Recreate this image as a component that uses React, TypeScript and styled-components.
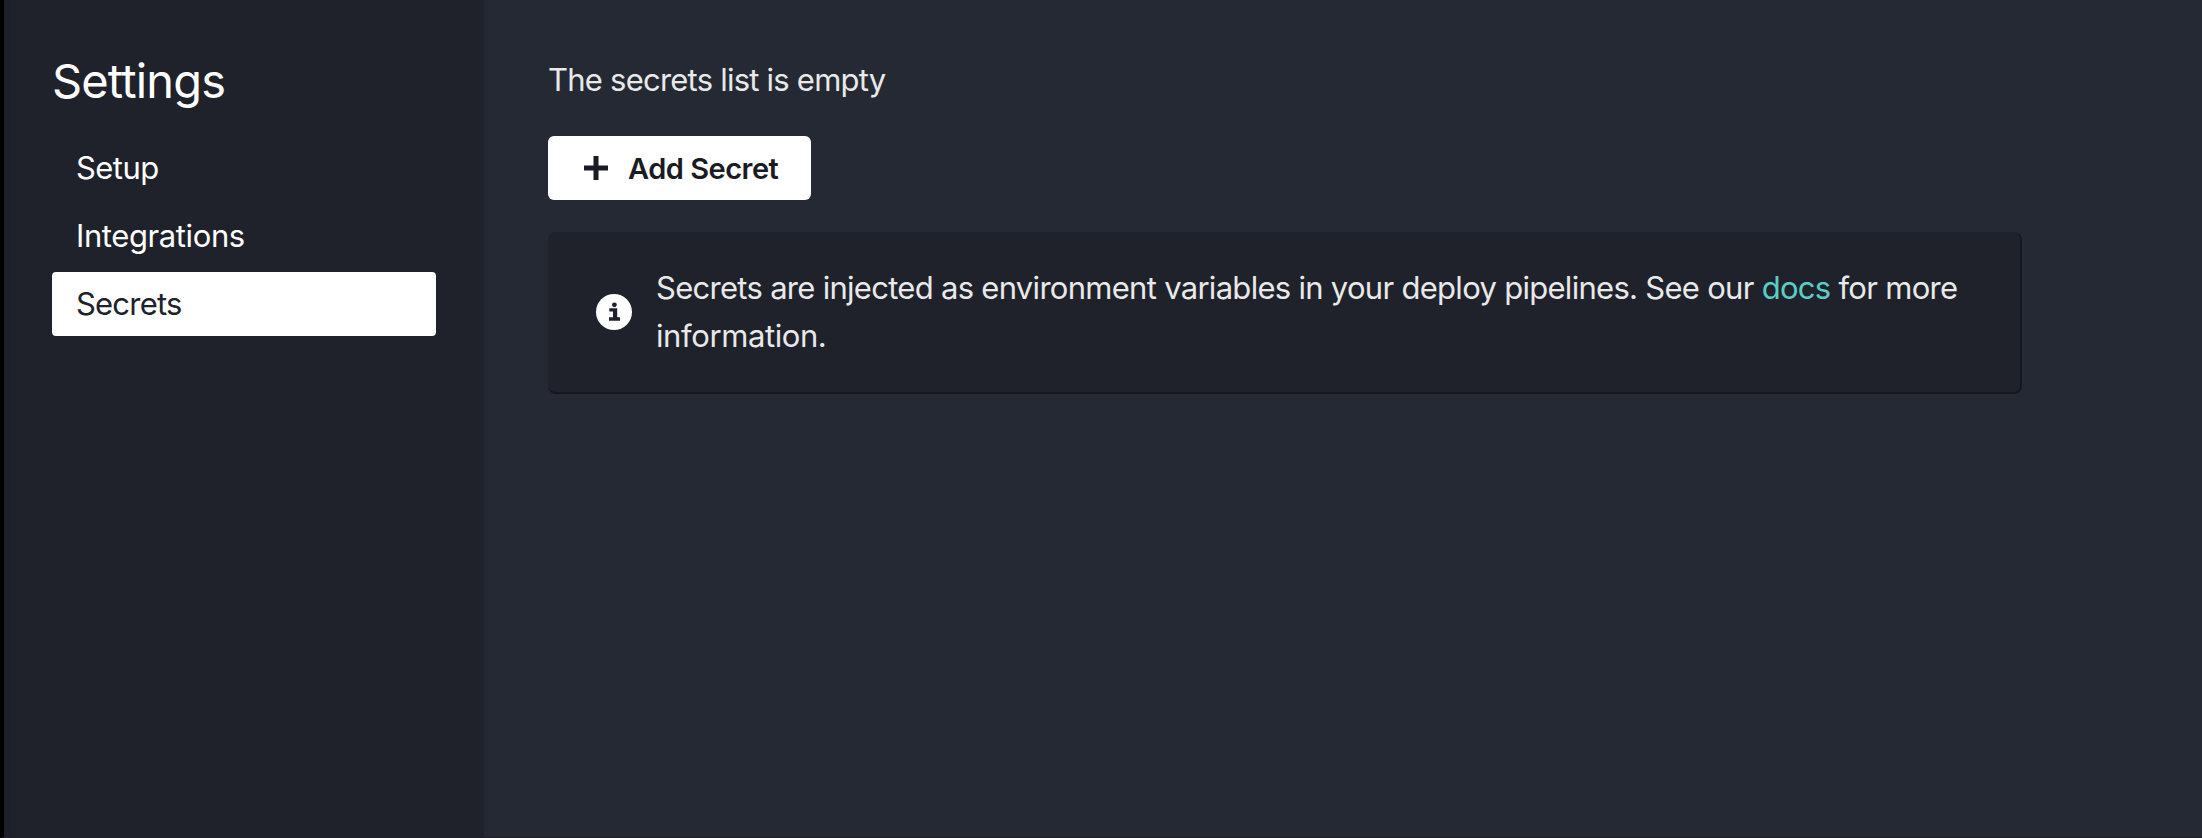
import React from "react";
import styled, { createGlobalStyle } from "styled-components";

const GlobalStyle = createGlobalStyle`
  *, *::before, *::after { box-sizing: border-box; }
  body {
    margin: 0;
    background: #252933;
    font-family: Inter, "Liberation Sans", sans-serif;
    font-size: 31px;
    line-height: 48px;
  }
`;

const Page = styled.div`
  display: flex;
  height: 838px;
  border-left: 4px solid #000;
  border-bottom: 1px solid #20212b;
  overflow: hidden;
`;

const Sidebar = styled.aside`
  width: 480px;
  padding: 49px 48px 48px;
  background: linear-gradient(to right, #1c1f26, #20222b 8px);
`;

const Title = styled.h1`
  margin: 0 0 23px;
  font-size: 47px;
  font-weight: 400;
  line-height: 64px;
  letter-spacing: -0.85px;
  color: #fff;
`;

const Nav = styled.nav`
  display: flex;
  flex-direction: column;
  gap: 4px;
`;

const NavItem = styled.a<{ $active?: boolean; $tracking: number }>`
  display: block;
  height: 64px;
  padding: 8px 24px;
  border-radius: 4px;
  letter-spacing: ${(p) => p.$tracking}px;
  color: ${(p) => (p.$active ? "#20222b" : "#fff")};
  background: ${(p) => (p.$active ? "#fff" : "transparent")};
`;

const Main = styled.main`
  display: flex;
  flex-direction: column;
  align-items: flex-start;
  width: 1602px;
  padding: 56px 64px;
`;

const EmptyText = styled.p`
  margin: 0 0 32px;
  letter-spacing: -0.77px;
  color: #e9e9ea;
`;

const AddButton = styled.button`
  display: flex;
  align-items: center;
  gap: 20px;
  width: 263px;
  height: 64px;
  margin-bottom: 32px;
  padding: 0 0 0 36px;
  border: 0;
  border-radius: 6px;
  font: 600 29px/48px Inter, "Liberation Sans", sans-serif;
  letter-spacing: -0.5px;
  white-space: nowrap;
  color: #1b1c23;
  background: #fff;
`;

const ButtonLabel = styled.span`
  padding-top: 2px;
`;

const Notice = styled.section`
  display: flex;
  align-items: center;
  gap: 24px;
  width: 1474px;
  height: 162px;
  padding: 32px 46px 32px 48px;
  border: 0 solid #16181f;
  border-width: 0 2px 2px 0;
  border-radius: 8px;
  background: #20222b;

  > svg {
    flex: none;
  }
`;

const NoticeText = styled.p`
  margin: 0;
  color: #e9e9ea;
`;

const NoticeLine = styled.span<{ $tracking: number }>`
  display: block;
  letter-spacing: ${(p) => p.$tracking}px;
  white-space: nowrap;
`;

const DocsLink = styled.a`
  color: #5bcdc6;
`;

const PlusIcon = () => (
  <svg width="24" height="24" viewBox="0 0 24 24" fill="currentColor">
    <rect x="9.5" y="0" width="5" height="24" />
    <rect x="0" y="9.5" width="24" height="5" />
  </svg>
);

const InfoIcon = () => (
  <svg width="36" height="36" viewBox="0 0 36 36">
    <circle cx="18" cy="18" r="18" fill="#fff" />
    <g fill="#20222b">
      <circle cx="18.4" cy="10.8" r="2.4" />
      <path d="M13.3 14.2H21.2V23.3H24V26.7H13V23.3H17V17.4H13.3Z" />
    </g>
  </svg>
);

export default function App() {
  return (
    <>
      <GlobalStyle />
      <Page>
        <Sidebar>
          <Title>Settings</Title>
          <Nav>
            <NavItem $tracking={-0.55}>Setup</NavItem>
            <NavItem $tracking={-0.4}>Integrations</NavItem>
            <NavItem $tracking={-0.8} $active>Secrets</NavItem>
          </Nav>
        </Sidebar>
        <Main>
          <EmptyText>The secrets list is empty</EmptyText>
          <AddButton>
            <PlusIcon />
            <ButtonLabel>Add Secret</ButtonLabel>
          </AddButton>
          <Notice>
            <InfoIcon />
            <NoticeText>
              <NoticeLine $tracking={-0.71}>
                Secrets are injected as environment variables in your deploy pipelines. See our{" "}
                <DocsLink>docs</DocsLink> for more
              </NoticeLine>
              <NoticeLine $tracking={-0.4}>information.</NoticeLine>
            </NoticeText>
          </Notice>
        </Main>
      </Page>
    </>
  );
}
